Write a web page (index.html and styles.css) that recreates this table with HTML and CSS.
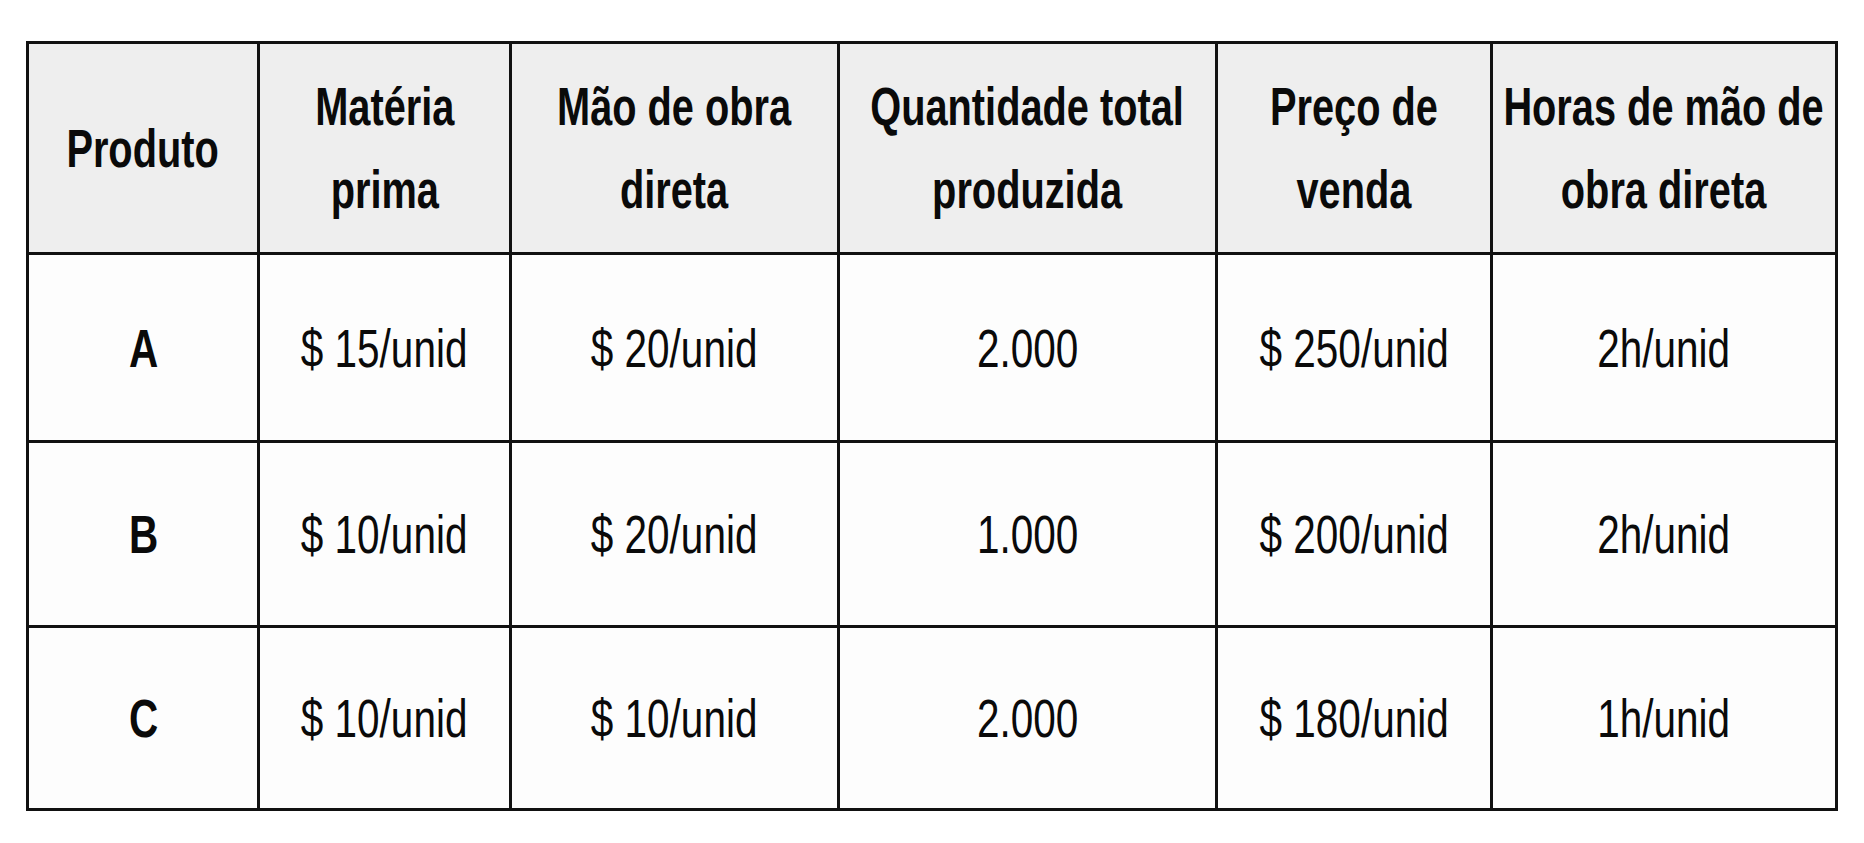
FILE: index.html
```html
<!DOCTYPE html>
<html lang="pt">
<head>
<meta charset="utf-8">
<title>Tabela de produtos</title>
<link rel="stylesheet" href="styles.css">
</head>
<body>
<table class="grid">
  <colgroup>
    <col class="c1"><col class="c2"><col class="c3"><col class="c4"><col class="c5"><col class="c6">
  </colgroup>
  <thead>
    <tr class="head">
      <th><div class="cell"><span class="txt">Produto</span></div></th>
      <th><div class="cell"><span class="txt">Matéria<br>prima</span></div></th>
      <th><div class="cell"><span class="txt">Mão de obra<br>direta</span></div></th>
      <th><div class="cell"><span class="txt">Quantidade total<br>produzida</span></div></th>
      <th><div class="cell"><span class="txt">Preço de<br>venda</span></div></th>
      <th><div class="cell"><span class="txt">Horas de mão de<br>obra direta</span></div></th>
    </tr>
  </thead>
  <tbody>
    <tr class="r1">
      <td class="prod"><div class="cell"><span class="txt">A</span></div></td>
      <td><div class="cell"><span class="txt">$ 15/unid</span></div></td>
      <td><div class="cell"><span class="txt">$ 20/unid</span></div></td>
      <td><div class="cell"><span class="txt">2.000</span></div></td>
      <td><div class="cell"><span class="txt">$ 250/unid</span></div></td>
      <td><div class="cell"><span class="txt">2h/unid</span></div></td>
    </tr>
    <tr class="r2">
      <td class="prod"><div class="cell"><span class="txt">B</span></div></td>
      <td><div class="cell"><span class="txt">$ 10/unid</span></div></td>
      <td><div class="cell"><span class="txt">$ 20/unid</span></div></td>
      <td><div class="cell"><span class="txt">1.000</span></div></td>
      <td><div class="cell"><span class="txt">$ 200/unid</span></div></td>
      <td><div class="cell"><span class="txt">2h/unid</span></div></td>
    </tr>
    <tr class="r3">
      <td class="prod"><div class="cell"><span class="txt">C</span></div></td>
      <td><div class="cell"><span class="txt">$ 10/unid</span></div></td>
      <td><div class="cell"><span class="txt">$ 10/unid</span></div></td>
      <td><div class="cell"><span class="txt">2.000</span></div></td>
      <td><div class="cell"><span class="txt">$ 180/unid</span></div></td>
      <td><div class="cell"><span class="txt">1h/unid</span></div></td>
    </tr>
  </tbody>
</table>
</body>
</html>
```

FILE: styles.css
```css
html, body {
  margin: 0;
  padding: 0;
  background: #ffffff;
}
body {
  padding: 41px 0 0 26px;
  font-family: "Liberation Sans", Arial, sans-serif;
  color: #0a0a0a;
}
.grid {
  border-collapse: collapse;
  table-layout: fixed;
  width: 1809px;
}
.c1 { width: 231px; }
.c2 { width: 252px; }
.c3 { width: 328px; }
.c4 { width: 378px; }
.c5 { width: 275px; }
.c6 { width: 345px; }
.grid th, .grid td {
  border: 3px solid #111111;
  text-align: center;
  vertical-align: middle;
  padding: 0;
}
.cell {
  display: flex;
  justify-content: center;
  align-items: center;
}
.txt {
  display: inline-block;
  white-space: nowrap;
  flex: none;
  transform: scaleX(0.75);
}
.grid th {
  background: #eeeeee;
  font-weight: 700;
  font-size: 53px;
  line-height: 83px;
}
.grid td {
  background: #fdfdfd;
  font-weight: 400;
  font-size: 54px;
  line-height: 60px;
}
.grid td.prod {
  font-weight: 700;
}
.head { height: 211px; }
.r1 { height: 188px; }
.r2 { height: 185px; }
.r3 { height: 183px; }
```
